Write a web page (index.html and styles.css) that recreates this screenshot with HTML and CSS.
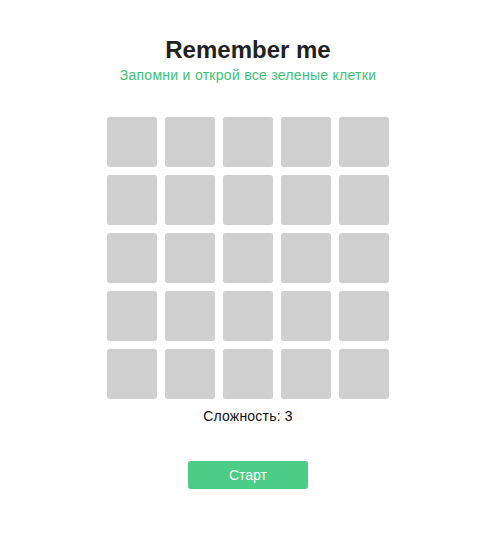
FILE: index.html
```html
<!DOCTYPE html>
<html lang="ru">
<head>
<meta charset="utf-8">
<title>Remember me</title>
<link rel="stylesheet" href="styles.css">
</head>
<body>
<main class="app">
  <h1 class="title">Remember me</h1>
  <p class="subtitle">Запомни и открой все зеленые клетки</p>
  <div class="grid">
    <div class="cell"></div><div class="cell"></div><div class="cell"></div><div class="cell"></div><div class="cell"></div>
    <div class="cell"></div><div class="cell"></div><div class="cell"></div><div class="cell"></div><div class="cell"></div>
    <div class="cell"></div><div class="cell"></div><div class="cell"></div><div class="cell"></div><div class="cell"></div>
    <div class="cell"></div><div class="cell"></div><div class="cell"></div><div class="cell"></div><div class="cell"></div>
    <div class="cell"></div><div class="cell"></div><div class="cell"></div><div class="cell"></div><div class="cell"></div>
  </div>
  <p class="level">Сложность: 3</p>
  <button class="start">Старт</button>
</main>
</body>
</html>
```
FILE: styles.css
```css
html, body {
  margin: 0;
  padding: 0;
  background: #fff;
}
body {
  font-family: "Liberation Sans", Arial, sans-serif;
  color: #222;
}
.app {
  display: flex;
  flex-direction: column;
  align-items: center;
  padding-top: 36px;
}
.title {
  margin: 0;
  font-size: 24px;
  line-height: 28px;
  font-weight: bold;
  color: #222;
}
.subtitle {
  margin: 3px 0 0;
  font-size: 14px;
  line-height: 16px;
  letter-spacing: 0.28px;
  color: #3cc274;
}
.grid {
  margin-top: 34px;
  display: grid;
  grid-template-columns: repeat(5, 50px);
  grid-auto-rows: 50px;
  gap: 8px;
}
.cell {
  background: #cfcfcf;
  border-radius: 3px;
}
.level {
  margin: 9px 0 0;
  font-size: 14px;
  line-height: 16px;
  letter-spacing: 0.2px;
  color: #111;
}
.start {
  margin-top: 37px;
  width: 120px;
  height: 28px;
  border: none;
  border-radius: 3px;
  background: #4bcd85;
  color: #fff;
  font-family: "Liberation Sans", Arial, sans-serif;
  font-size: 14px;
  padding: 0;
}
```
